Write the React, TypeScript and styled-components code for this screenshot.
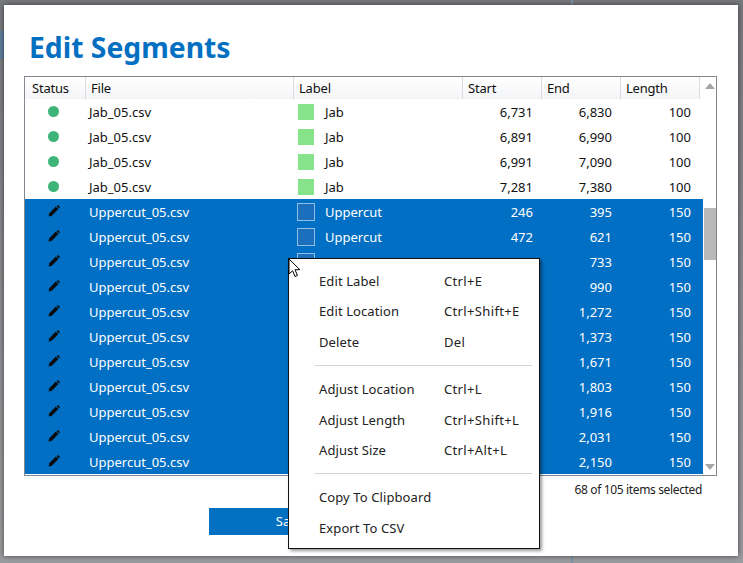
import React from 'react'
import styled, { createGlobalStyle } from 'styled-components'

const GlobalStyle = createGlobalStyle`
  html, body {
    margin: 0;
    padding: 0;
    width: 743px;
    height: 563px;
    overflow: hidden;
    background: #8e9094;
    font-family: "Noto Sans", "Open Sans", sans-serif;
  }
`

// the window behind the dialog only peeks out at the edges
const Screen = styled.div`
  position: relative;
  width: 743px;
  height: 563px;
  padding: 5px 5px 7px 4px;
  box-sizing: border-box;
  background:
    linear-gradient(#5f7f9c, #5f7f9c) 0 31px / 4px 28px no-repeat,
    linear-gradient(#7f93a6, #7f93a6) 571px 0 / 2px 563px no-repeat,
    linear-gradient(#77797d, #9a9b9e);
`

const Dialog = styled.div`
  width: 100%;
  height: 100%;
  box-sizing: border-box;
  background: #fff;
  box-shadow: 0 0 5px rgba(0, 0, 0, 0.55);
  padding: 24px 22px 0 20px;
  display: flex;
  flex-direction: column;
`

const Title = styled.h1`
  margin: 0 0 7px 5px;
  height: 40px;
  font-size: 28.3px;
  line-height: 36px;
  font-weight: 700;
  color: #0470c2;
`

const ListBox = styled.div`
  width: 693px;
  height: 400px;
  box-sizing: border-box;
  border: 1px solid #828790;
  display: flex;
  overflow: hidden;
  flex: none;
`

const ListBody = styled.div`
  width: 678px;
  flex: none;
  overflow: hidden;
`

const HeaderRow = styled.div`
  display: grid;
  grid-template-columns: 61px 208px 169px 79px 79px 79px;
  width: 675px;
  height: 22px;
  background: linear-gradient(#ffffff, #f4f5f7);
`

const HeaderCell = styled.div`
  border-right: 1px solid #d9dbde;
  padding-left: 5px;
  font-size: 13px;
  line-height: 22px;
  color: #111;
  letter-spacing: -0.2px;

  &:first-child {
    padding-left: 7px;
  }
`

const Row = styled.div<{ $selected?: boolean }>`
  display: grid;
  grid-template-columns: 61px 208px 169px 79px 79px 79px;
  height: 25px;
  align-items: center;
  background: ${(p) => (p.$selected ? '#016fc3' : '#fff')};
  color: ${(p) => (p.$selected ? '#fff' : '#111')};
  font-size: 13px;
`

const StatusCell = styled.div`
  display: flex;
  justify-content: center;
  margin-top: -1px;
  margin-left: -4px;
`

const Dot = styled.span`
  width: 11px;
  height: 11px;
  border-radius: 50%;
  background: #3eb478;
`

const FileCell = styled.div`
  padding-left: 3px;
`

const LabelCell = styled.div`
  display: flex;
  align-items: center;
  gap: 11px;
  padding-left: 4px;
`

const Swatch = styled.span<{ $selected?: boolean }>`
  width: ${(p) => (p.$selected ? '18px' : '16px')};
  height: ${(p) => (p.$selected ? '18px' : '16px')};
  margin: ${(p) => (p.$selected ? '0 -1px' : '0')};
  box-sizing: border-box;
  flex: none;
  background: ${(p) => (p.$selected ? '#1c6fbc' : '#86e38a')};
  border: ${(p) => (p.$selected ? '1px solid #8fbde3' : 'none')};
`

const NumberCell = styled.div`
  text-align: right;
  padding-right: 9px;
`

const ScrollBar = styled.div`
  width: 14px;
  flex: none;
  display: flex;
  flex-direction: column;
  align-items: center;
  position: relative;
`

const ArrowUp = styled.span`
  margin-top: 6px;
  width: 0;
  height: 0;
  border-left: 5.5px solid transparent;
  border-right: 5.5px solid transparent;
  border-bottom: 6px solid #a6a6a6;
`

const Thumb = styled.div`
  width: 13px;
  height: 52px;
  margin-top: 119px;
  background: #b9b9b9;
`

const ArrowDown = styled.span`
  margin-top: auto;
  margin-bottom: 5px;
  width: 0;
  height: 0;
  border-left: 5.5px solid transparent;
  border-right: 5.5px solid transparent;
  border-top: 6px solid #a6a6a6;
`

const SelectionNote = styled.div`
  width: 678px;
  text-align: right;
  margin-top: 6px;
  font-size: 12px;
  line-height: 16px;
  color: #222;
  letter-spacing: -0.35px;
`

const Footer = styled.div`
  margin-top: 10px;
  padding-left: 185px;
`

const SaveButton = styled.div`
  width: 162px;
  height: 27px;
  background: #0470c2;
  color: #fff;
  font-size: 13px;
  line-height: 27px;
  text-align: center;
`

const Menu = styled.div`
  position: absolute;
  left: 288px;
  top: 258px;
  width: 252px;
  height: 291px;
  box-sizing: border-box;
  background: #fff;
  border: 1px solid #111;
  box-shadow: 2px 2px 3px rgba(0, 0, 0, 0.4);
  padding: 7px 0 0 30px;
  color: #222;
  font-size: 13px;
  letter-spacing: 0.1px;
`

const MenuItem = styled.div`
  display: grid;
  grid-template-columns: 125px 1fr;
  height: 30.4px;
  line-height: 30px;
`

const Shortcut = styled.span`
  letter-spacing: 0.35px;
`

const MenuSeparator = styled.div`
  height: 1px;
  width: 217px;
  margin: 8px 0 8px -4px;
  background: #d4d4d4;
`

const Cursor = styled.svg`
  position: absolute;
  left: 288px;
  top: 258px;
  width: 14px;
  height: 22px;
`

const PencilIcon = () => (
  <svg width="12" height="12" viewBox="0 0 12 12">
    <path d="M0.5 11.5 L1.3 8.2 L7.9 1.6 L10.4 4.1 L3.8 10.7 Z" fill="#0b0b0b" />
    <path d="M8.6 0.9 L9.3 0.4 Q10 0 10.6 0.5 L11.5 1.4 Q12 2 11.6 2.7 L11.1 3.4 Z" fill="#0b0b0b" />
  </svg>
)

const jabRows = [
  ['6,731', '6,830'],
  ['6,891', '6,990'],
  ['6,991', '7,090'],
  ['7,281', '7,380'],
]

const uppercutRows = [
  ['246', '395'],
  ['472', '621'],
  ['584', '733'],
  ['841', '990'],
  ['1,123', '1,272'],
  ['1,224', '1,373'],
  ['1,522', '1,671'],
  ['1,654', '1,803'],
  ['1,767', '1,916'],
  ['1,882', '2,031'],
  ['2,001', '2,150'],
]

const columns = ['Status', 'File', 'Label', 'Start', 'End', 'Length']

const menuGroups = [
  [
    ['Edit Label', 'Ctrl+E'],
    ['Edit Location', 'Ctrl+Shift+E'],
    ['Delete', 'Del'],
  ],
  [
    ['Adjust Location', 'Ctrl+L'],
    ['Adjust Length', 'Ctrl+Shift+L'],
    ['Adjust Size', 'Ctrl+Alt+L'],
  ],
  [
    ['Copy To Clipboard', ''],
    ['Export To CSV', ''],
  ],
]

export default function App() {
  return (
    <Screen>
      <GlobalStyle />
      <Dialog>
        <Title>Edit Segments</Title>
        <ListBox>
          <ListBody>
            <HeaderRow>
              {columns.map((c) => (
                <HeaderCell key={c}>{c}</HeaderCell>
              ))}
            </HeaderRow>
            {jabRows.map(([start, end]) => (
              <Row key={start}>
                <StatusCell>
                  <Dot />
                </StatusCell>
                <FileCell>Jab_05.csv</FileCell>
                <LabelCell>
                  <Swatch />
                  Jab
                </LabelCell>
                <NumberCell>{start}</NumberCell>
                <NumberCell>{end}</NumberCell>
                <NumberCell>100</NumberCell>
              </Row>
            ))}
            {uppercutRows.map(([start, end]) => (
              <Row key={start} $selected>
                <StatusCell>
                  <PencilIcon />
                </StatusCell>
                <FileCell>Uppercut_05.csv</FileCell>
                <LabelCell>
                  <Swatch $selected />
                  Uppercut
                </LabelCell>
                <NumberCell>{start}</NumberCell>
                <NumberCell>{end}</NumberCell>
                <NumberCell>150</NumberCell>
              </Row>
            ))}
          </ListBody>
          <ScrollBar>
            <ArrowUp />
            <Thumb />
            <ArrowDown />
          </ScrollBar>
        </ListBox>
        <SelectionNote>68 of 105 items selected</SelectionNote>
        <Footer>
          <SaveButton>Save</SaveButton>
        </Footer>
      </Dialog>
      <Menu>
        {menuGroups.map((group, i) => (
          <React.Fragment key={i}>
            {i > 0 && <MenuSeparator />}
            {group.map(([label, keys]) => (
              <MenuItem key={label}>
                <span>{label}</span>
                <Shortcut>{keys}</Shortcut>
              </MenuItem>
            ))}
          </React.Fragment>
        ))}
      </Menu>
      <Cursor viewBox="0 0 14 22">
        <path
          d="M1 1 L1 16 L4.6 12.8 L7 18.5 L9.4 17.4 L7 11.8 L11.8 11.6 Z"
          fill="#fff"
          stroke="#000"
          strokeWidth="1"
        />
      </Cursor>
    </Screen>
  )
}
